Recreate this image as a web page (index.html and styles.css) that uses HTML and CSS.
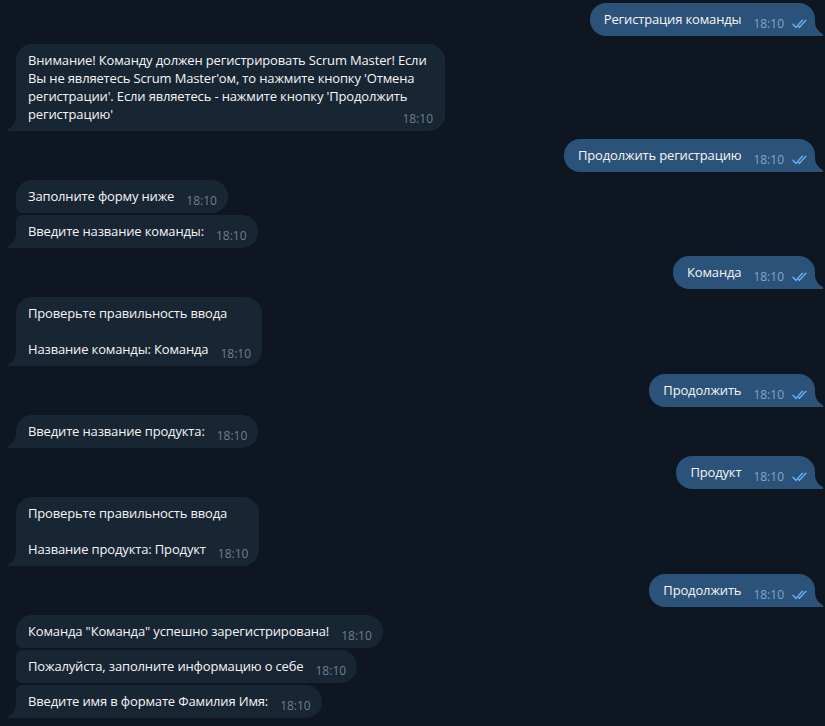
FILE: index.html
```html
<!DOCTYPE html>
<html lang="ru">
<head>
<meta charset="utf-8">
<title>Chat</title>
<link rel="stylesheet" href="styles.css">
</head>
<body>
<div class="chat">
  <div class="row out"><div class="bubble tail">Регистрация команды<span class="meta"><span class="time">18:10</span><svg class="check" width="16" height="10" viewBox="0 0 16 10"><path d="M1 5.2 L4 8.4 L10.4 1.2 M6.6 7.6 L7.4 8.4 L13.8 1.2" /></svg></span></div></div>

  <div class="row in"><div class="bubble tail wide">Внимание! Команду должен регистрировать Scrum Master! Если Вы не являетесь Scrum Master'ом, то нажмите кнопку 'Отмена регистрации'. Если являетесь - нажмите кнопку 'Продолжить регистрацию'<span class="meta"><span class="time">18:10</span></span></div></div>

  <div class="row out"><div class="bubble tail">Продолжить регистрацию<span class="meta"><span class="time">18:10</span><svg class="check" width="16" height="10" viewBox="0 0 16 10"><path d="M1 5.2 L4 8.4 L10.4 1.2 M6.6 7.6 L7.4 8.4 L13.8 1.2" /></svg></span></div></div>

  <div class="row in"><div class="bubble first">Заполните форму ниже<span class="meta"><span class="time">18:10</span></span></div></div>
  <div class="row in cont"><div class="bubble last tail">Введите название команды:<span class="meta"><span class="time">18:10</span></span></div></div>

  <div class="row out"><div class="bubble tail">Команда<span class="meta"><span class="time">18:10</span><svg class="check" width="16" height="10" viewBox="0 0 16 10"><path d="M1 5.2 L4 8.4 L10.4 1.2 M6.6 7.6 L7.4 8.4 L13.8 1.2" /></svg></span></div></div>

  <div class="row in"><div class="bubble tail">Проверьте правильность ввода<br><br>Название команды: Команда<span class="meta"><span class="time">18:10</span></span></div></div>

  <div class="row out"><div class="bubble tail">Продолжить<span class="meta"><span class="time">18:10</span><svg class="check" width="16" height="10" viewBox="0 0 16 10"><path d="M1 5.2 L4 8.4 L10.4 1.2 M6.6 7.6 L7.4 8.4 L13.8 1.2" /></svg></span></div></div>

  <div class="row in"><div class="bubble tail">Введите название продукта:<span class="meta"><span class="time">18:10</span></span></div></div>

  <div class="row out"><div class="bubble tail">Продукт<span class="meta"><span class="time">18:10</span><svg class="check" width="16" height="10" viewBox="0 0 16 10"><path d="M1 5.2 L4 8.4 L10.4 1.2 M6.6 7.6 L7.4 8.4 L13.8 1.2" /></svg></span></div></div>

  <div class="row in"><div class="bubble tail">Проверьте правильность ввода<br><br>Название продукта: Продукт<span class="meta"><span class="time">18:10</span></span></div></div>

  <div class="row out"><div class="bubble tail">Продолжить<span class="meta"><span class="time">18:10</span><svg class="check" width="16" height="10" viewBox="0 0 16 10"><path d="M1 5.2 L4 8.4 L10.4 1.2 M6.6 7.6 L7.4 8.4 L13.8 1.2" /></svg></span></div></div>

  <div class="row in"><div class="bubble first">Команда "Команда" успешно зарегистрирована!<span class="meta"><span class="time">18:10</span></span></div></div>
  <div class="row in cont"><div class="bubble mid">Пожалуйста, заполните информацию о себе<span class="meta"><span class="time">18:10</span></span></div></div>
  <div class="row in cont"><div class="bubble last tail">Введите имя в формате Фамилия Имя:<span class="meta"><span class="time">18:10</span></span></div></div>
</div>
</body>
</html>
```

FILE: styles.css
```css
html, body {
  margin: 0;
  padding: 0;
  background: #0e1621;
}

body {
  font-family: "Open Sans", "Noto Sans", sans-serif;
  font-size: 13px;
  color: #f5f5f5;
}

.chat {
  display: flex;
  flex-direction: column;
  padding: 3px 10px 0 16px;
}

.row {
  display: flex;
  margin-top: 8px;
}

.row:first-child {
  margin-top: 0;
}

.row.cont {
  margin-top: 2px;
}

.row.out {
  justify-content: flex-end;
}

.row.in {
  justify-content: flex-start;
}

.bubble {
  position: relative;
  max-width: 405px;
  padding: 7px 11px 8px 12px;
  line-height: 18px;
  letter-spacing: -0.15px;
  border-radius: 16px;
  background: #182533;
}

.bubble.wide {
  padding-right: 12px;
}

.out .bubble {
  background: #2b5278;
  padding-left: 14px;
  padding-right: 7px;
}

.in .bubble.first {
  border-bottom-left-radius: 6px;
}

.in .bubble.mid,
.in .bubble.last {
  border-top-left-radius: 6px;
}

.in .bubble.mid {
  border-bottom-left-radius: 6px;
}

.in .bubble.tail {
  border-bottom-left-radius: 0;
}

.out .bubble.tail {
  border-bottom-right-radius: 0;
}

.bubble.tail::before,
.bubble.tail::after {
  content: "";
  position: absolute;
  bottom: 0;
  height: 14px;
}

.in .bubble.tail::before {
  left: -8px;
  width: 16px;
  background: #182533;
}

.in .bubble.tail::after {
  left: -24px;
  width: 24px;
  background: #0e1621;
  border-bottom-right-radius: 16px 14px;
}

.out .bubble.tail::before {
  right: -8px;
  width: 16px;
  background: #2b5278;
}

.out .bubble.tail::after {
  right: -24px;
  width: 24px;
  background: #0e1621;
  border-bottom-left-radius: 16px 14px;
}

.meta {
  float: right;
  position: relative;
  top: 5px;
  margin-left: 12px;
  font-size: 12px;
  line-height: 18px;
  letter-spacing: 0;
  white-space: nowrap;
}

.in .meta .time {
  color: #6d7f8f;
}

.out .meta .time {
  color: #7da8d3;
}

.check {
  display: inline-block;
  margin-left: 8px;
  vertical-align: -1px;
}

.check path {
  fill: none;
  stroke: #6cb2f2;
  stroke-width: 1.4;
  stroke-linecap: round;
  stroke-linejoin: round;
}
```
